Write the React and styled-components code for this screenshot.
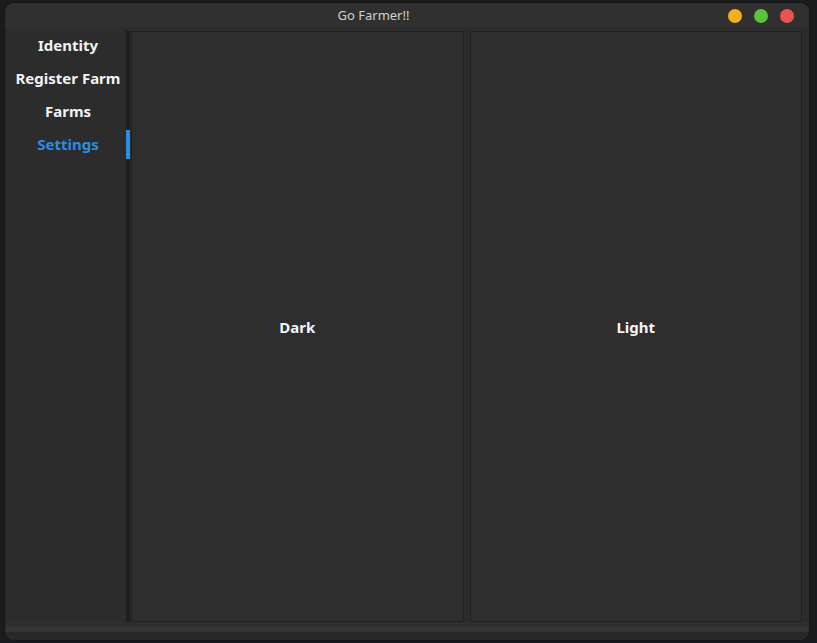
import React from "react";
import styled, { createGlobalStyle } from "styled-components";

const Global = createGlobalStyle`
  html, body { margin: 0; padding: 0; }
  body {
    background: #1a1b1d;
    font-family: "Noto Sans", "Open Sans", sans-serif;
    width: 817px;
    height: 643px;
    overflow: hidden;
  }
  #root { padding: 2px 7px 0 4px; }
`;

const Window = styled.div`
  box-sizing: border-box;
  width: 806px;
  height: 639px;
  border-radius: 10px;
  border: 1px solid #151515;
  background: #2c2c2c;
  display: flex;
  flex-direction: column;
  overflow: hidden;
`;

const TitleBar = styled.div`
  height: 25px;
  flex: none;
  background: #303030;
  display: flex;
  align-items: center;
  padding: 0 15px 0 14px;
`;

const Title = styled.div`
  flex: 1;
  text-align: center;
  color: #d0d0d0;
  font-size: 13px;
  line-height: 25px;
`;

const Controls = styled.div`
  display: flex;
  gap: 12px;
  margin-top: 1px;
`;

const Dot = styled.span`
  width: 14px;
  height: 14px;
  border-radius: 50%;
  background: ${(p) => p.$color};
`;

const Body = styled.div`
  flex: 1;
  display: flex;
  min-height: 0;
  padding-right: 7px;
`;

const Sidebar = styled.nav`
  width: 116px;
  padding-left: 5px;
  padding-top: 1px;
  display: flex;
  flex-direction: column;
`;

const NavItem = styled.div`
  height: 33px;
  line-height: 33px;
  text-align: center;
  font-size: 15px;
  font-weight: 700;
  color: ${(p) => (p.$active ? "#2a8de3" : "#f2f2f2")};
`;

const Track = styled.div`
  position: relative;
  width: 4px;
  margin-top: 3px;
  height: 591px;
  background: #1e1e1e;
`;

const Thumb = styled.div`
  position: absolute;
  left: 0;
  top: 99px;
  width: 4px;
  height: 29px;
  background: #2a8de3;
`;

const Panels = styled.div`
  flex: 1;
  display: grid;
  grid-template-columns: 1fr 1fr;
  gap: 6px;
  margin-left: 1px;
  margin-top: 3px;
  height: 591px;
`;

const Panel = styled.div`
  box-sizing: border-box;
  border: 1px solid #212121;
  background: #2e2e2e;
  display: flex;
  align-items: center;
  justify-content: center;
  color: #f5f5f5;
  font-size: 15px;
  font-weight: 700;
`;

const Footer = styled.div`
  flex: none;
  display: flex;
  flex-direction: column;
`;

const FooterBand = styled.div`
  height: ${(p) => p.$h}px;
  background: ${(p) => p.$bg};
`;

export default function App() {
  const items = ["Identity", "Register Farm", "Farms", "Settings"];
  return (
    <>
      <Global />
      <Window>
        <TitleBar>
          <Title>Go Farmer!!</Title>
          <Controls>
            <Dot $color="#f2b01f" />
            <Dot $color="#5bc33c" />
            <Dot $color="#ea5450" />
          </Controls>
        </TitleBar>
        <Body>
          <Sidebar>
            {items.map((t) => (
              <NavItem key={t} $active={t === "Settings"}>
                {t}
              </NavItem>
            ))}
          </Sidebar>
          <Track>
            <Thumb />
          </Track>
          <Panels>
            <Panel>Dark</Panel>
            <Panel>Light</Panel>
          </Panels>
        </Body>
        <Footer>
          <FooterBand $h={5} $bg="#2e2e2e" />
          <FooterBand $h={5} $bg="#343434" />
          <FooterBand $h={8} $bg="#282828" />
        </Footer>
      </Window>
    </>
  );
}
